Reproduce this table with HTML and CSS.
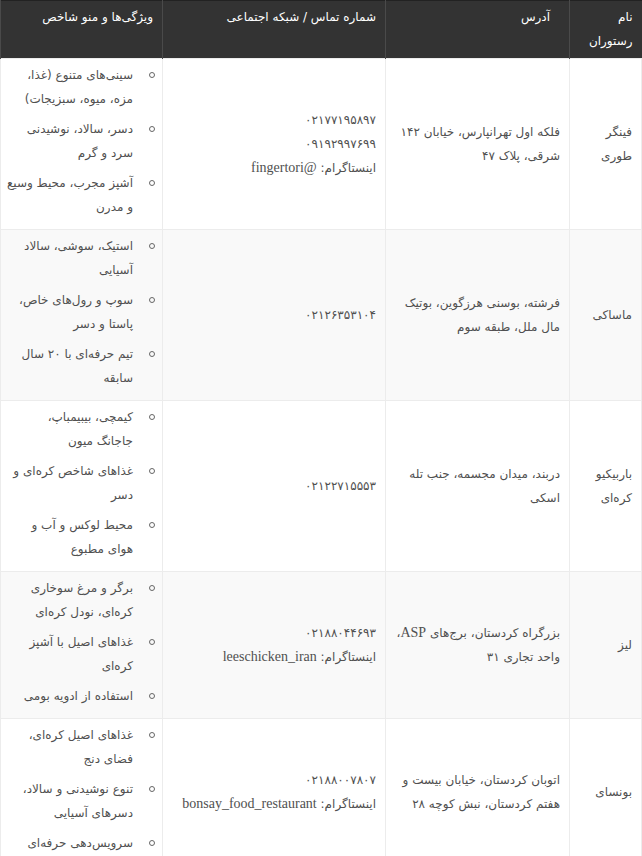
FILE: index.html
```html
<!DOCTYPE html>
<html lang="fa" dir="rtl">
<head>
<meta charset="utf-8">
<title>رستوران‌ها</title>
<link rel="stylesheet" href="styles.css">
</head>
<body>
<table class="rest-table">
  <colgroup>
    <col class="c-name">
    <col class="c-addr">
    <col class="c-phone">
    <col class="c-feat">
  </colgroup>
  <thead>
    <tr>
      <th>نام رستوران</th>
      <th class="th-addr">آدرس</th>
      <th>شماره تماس / شبکه اجتماعی</th>
      <th>ویژگی‌ها و منو شاخص</th>
    </tr>
  </thead>
  <tbody>
    <tr>
      <td>فینگر طوری</td>
      <td>فلکه اول تهرانپارس، خیابان ۱۴۲ شرقی، پلاک ۴۷</td>
      <td>۰۲۱۷۷۱۹۵۸۹۷<br>۰۹۱۹۲۹۹۷۶۹۹<br>اینستاگرام: <span class="latin">@fingertori</span></td>
      <td class="feat-cell">
        <ul class="feats">
          <li>سینی‌های متنوع (غذا،<br>مزه، میوه، سبزیجات)</li>
          <li>دسر، سالاد، نوشیدنی<br>سرد و گرم</li>
          <li>آشپز مجرب، محیط وسیع<br>و مدرن</li>
        </ul>
      </td>
    </tr>
    <tr>
      <td>ماساکی</td>
      <td>فرشته، بوسنی هرزگوین، بوتیک مال ملل، طبقه سوم</td>
      <td>۰۲۱۲۶۳۵۳۱۰۴</td>
      <td class="feat-cell">
        <ul class="feats">
          <li>استیک، سوشی، سالاد<br>آسیایی</li>
          <li>سوپ و رول‌های خاص،<br>پاستا و دسر</li>
          <li>تیم حرفه‌ای با ۲۰ سال<br>سابقه</li>
        </ul>
      </td>
    </tr>
    <tr>
      <td>باربیکیو کره‌ای</td>
      <td>دربند، میدان مجسمه، جنب تله اسکی</td>
      <td>۰۲۱۲۲۷۱۵۵۵۳</td>
      <td class="feat-cell">
        <ul class="feats">
          <li>کیمچی، بیبیمباپ،<br>جاجانگ میون</li>
          <li>غذاهای شاخص کره‌ای و<br>دسر</li>
          <li>محیط لوکس و آب و<br>هوای مطبوع</li>
        </ul>
      </td>
    </tr>
    <tr>
      <td>لیز</td>
      <td>بزرگراه کردستان، برج‌های <span class="latin">ASP</span>، واحد تجاری ۳۱</td>
      <td>۰۲۱۸۸۰۴۴۶۹۳<br>اینستاگرام: <span class="latin">leeschicken_iran</span></td>
      <td class="feat-cell">
        <ul class="feats">
          <li>برگر و مرغ سوخاری کره‌ای، نودل کره‌ای</li>
          <li>غذاهای اصیل با آشپز<br>کره‌ای</li>
          <li>استفاده از ادویه بومی</li>
        </ul>
      </td>
    </tr>
    <tr>
      <td>بونسای</td>
      <td>اتوبان کردستان، خیابان بیست و هفتم کردستان، نبش کوچه ۲۸</td>
      <td>۰۲۱۸۸۰۰۷۸۰۷<br>اینستاگرام: <span class="latin">bonsay_food_restaurant</span></td>
      <td class="feat-cell">
        <ul class="feats">
          <li>غذاهای اصیل کره‌ای،<br>فضای دنج</li>
          <li>تنوع نوشیدنی و سالاد،<br>دسرهای آسیایی</li>
          <li>سرویس‌دهی حرفه‌ای</li>
        </ul>
      </td>
    </tr>
  </tbody>
</table>
</body>
</html>
```

FILE: styles.css
```css
html, body {
  margin: 0;
  padding: 0;
  background: #ffffff;
}

body {
  font-family: "DejaVu Sans", "Noto Sans", sans-serif;
  font-size: 12px;
  color: #505050;
}

.rest-table {
  width: 641px;
  border-collapse: collapse;
  table-layout: fixed;
  direction: rtl;
  border-top: 1px solid #222222;
}

.c-name { width: 72px; }
.c-addr { width: 184px; }
.c-phone { width: 223px; }
.c-feat { width: 162px; }

.rest-table th {
  background: #333333;
  color: #ffffff;
  font-weight: normal;
  text-align: right;
  vertical-align: top;
  line-height: 24px;
  padding: 4px 9px 5px 8px;
  border-left: 1px solid #4a4a4a;
}

.rest-table th.th-addr {
  padding-right: 19px;
}

.rest-table td {
  text-align: right;
  vertical-align: middle;
  line-height: 24px;
  padding: 4px 9px 4px 8px;
  border: 1px solid #ececec;
}

.rest-table td.feat-cell {
  padding: 4px 5px 4px 2px;
}

.rest-table tbody tr:nth-child(even) td {
  background: #f9f9f9;
}

.latin {
  font-family: "Liberation Serif", serif;
  font-size: 14px;
}

.feats {
  margin: 0;
  padding: 0;
  list-style: none;
}

.feats li {
  position: relative;
  padding-right: 24px;
  margin-bottom: 6px;
}

.feats li::before {
  content: "";
  position: absolute;
  right: 2px;
  top: 9px;
  width: 4px;
  height: 4px;
  border: 1px solid #666666;
  border-radius: 50%;
}
```
